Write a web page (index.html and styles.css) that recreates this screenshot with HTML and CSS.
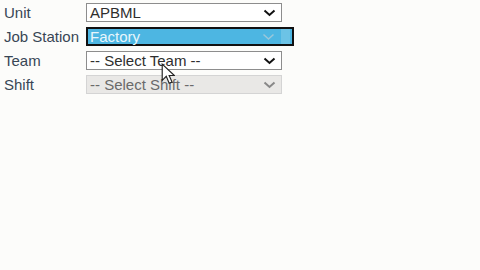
FILE: index.html
```html
<!DOCTYPE html>
<html lang="en">
<head>
    <meta charset="UTF-8">
    <title>Employee Filter</title>
    <link rel="stylesheet" href="styles.css">
</head>
<body>
    <form class="filter-form">
        <div class="form-row">
            <label>Unit</label>
            <div class="picker">
                <span>APBML</span>
                <svg class="chev" viewBox="0 0 12 8"><path d="M1 1.5 L6 6 L11 1.5"/></svg>
            </div>
        </div>
        <div class="form-row">
            <label>Job Station</label>
            <div class="picker picker-open">
                <span>Factory</span>
                <svg class="chev" viewBox="0 0 12 8"><path d="M1 1.5 L6 6 L11 1.5"/></svg>
                <i class="edge"></i>
            </div>
        </div>
        <div class="form-row">
            <label>Team</label>
            <div class="picker">
                <span>-- Select Team --</span>
                <svg class="chev" viewBox="0 0 12 8"><path d="M1 1.5 L6 6 L11 1.5"/></svg>
            </div>
        </div>
        <div class="form-row">
            <label>Shift</label>
            <div class="picker picker-disabled">
                <span>-- Select Shift --</span>
                <svg class="chev" viewBox="0 0 12 8"><path d="M1 1.5 L6 6 L11 1.5"/></svg>
            </div>
        </div>
        <svg class="cursor" viewBox="0 0 12 19"><path d="M1 1 L1 15 L4.5 11.5 L7 17.5 L9.5 16.5 L7 10.8 L11.5 10.8 Z"/></svg>
    </form>
</body>
</html>
```

FILE: styles.css
```css
body { margin: 0; background: #fcfcfa; font-family: "Liberation Sans", Arial, sans-serif; }
.filter-form { position: relative; display: flex; flex-direction: column; gap: 5px; padding: 3px 0 0 4px; }
.form-row { display: grid; grid-template-columns: 82px 196px; align-items: center; height: 19px; }
label { font-size: 15px; color: #384655; }
.picker { position: relative; display: flex; align-items: center; justify-content: space-between; height: 19px; box-sizing: border-box; border: 1px solid #8d8d8d; background: #fff; padding: 0 5px 0 3px; font-size: 15px; line-height: 17px; color: #2e2e2e; }
.chev { width: 13px; height: 8px; fill: none; stroke: #111; stroke-width: 2; }
.picker-open { width: 208px; border: 2px solid #111; background: #4db6e2; color: #e8f6fc; padding-right: 17px; padding-left: 2px; }
.picker-open .chev { stroke: #9ac7da; stroke-width: 1.5; }
.picker-open .edge { position: absolute; right: 2px; top: 0; bottom: 0; width: 9px; background: #6cc3e6; }
.picker-disabled { background: #e9e8e6; border-color: #d4d4d4; color: #6a6a6a; }
.picker-disabled .chev { stroke: #888; }
.cursor { position: absolute; left: 161px; top: 63px; width: 14px; height: 22px; fill: #fff; stroke: #222; stroke-width: 1; }
```
